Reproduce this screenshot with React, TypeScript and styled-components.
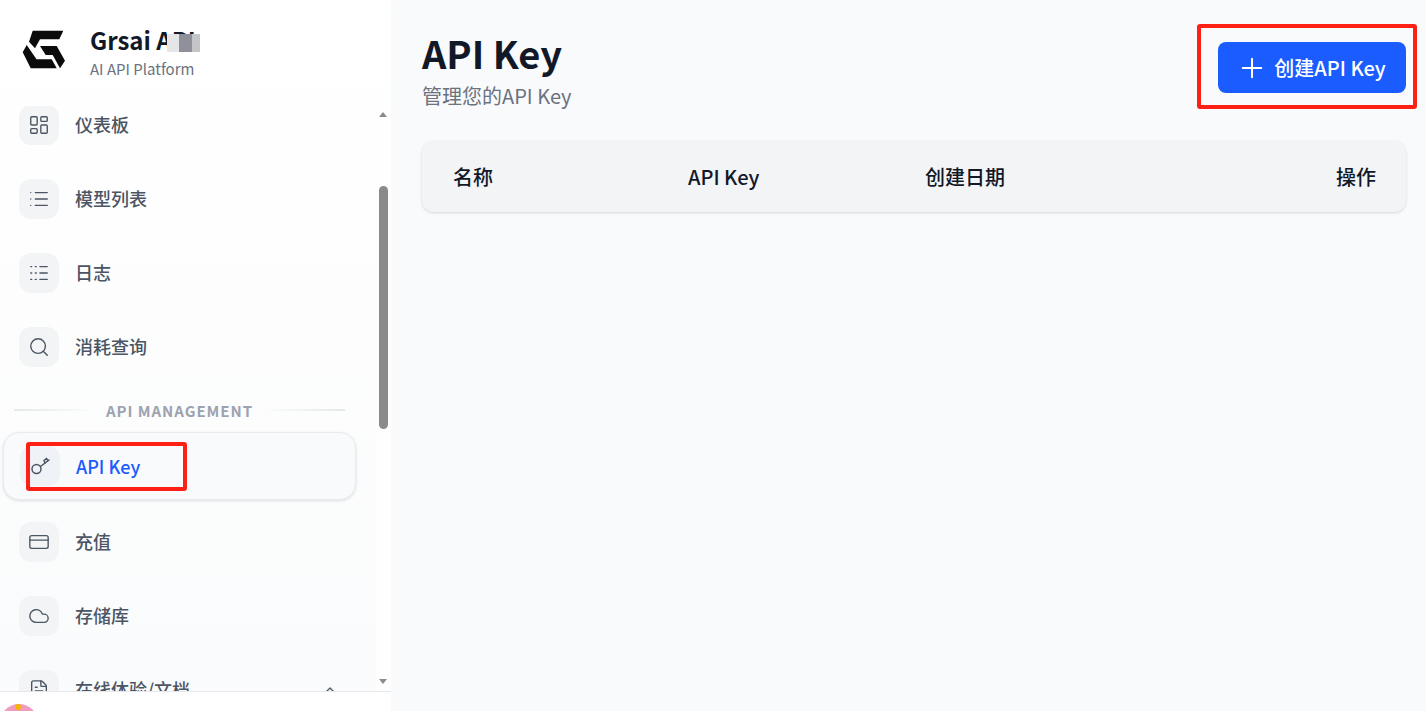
import React from 'react'
import styled, { createGlobalStyle } from 'styled-components'
import { LayoutDashboard, List, Logs, Search, CreditCard, Cloud, FileText, ChevronUp, Plus } from 'lucide-react'

const Global = createGlobalStyle`
  html, body { margin: 0; padding: 0; height: 100%; overflow: hidden; }
  body { font-family: "Noto Sans CJK SC", "Noto Sans", sans-serif; background: #f9fafb; }
`

const Page = styled.div`
  display: flex;
  width: 1426px;
  height: 711px;
  overflow: hidden;
`

const Sidebar = styled.aside`
  width: 391px;
  height: 711px;
  flex: none;
  display: flex;
  flex-direction: column;
  background: linear-gradient(180deg, #ffffff 0%, #fafbfc 100%);
`

const Brand = styled.div`
  height: 106px;
  flex: none;
  display: flex;
  align-items: center;
  padding: 0 0 6px 22px;
  box-sizing: border-box;
`

const BrandText = styled.div`
  margin-left: 24px;
  display: flex;
  flex-direction: column;
  padding-top: 4px;
`

const BrandName = styled.div`
  font-size: 24px;
  font-weight: 700;
  line-height: 32px;
  color: #111827;
  position: relative;
  width: 112px;
  white-space: nowrap;
`

const Blur = styled.span`
  position: absolute;
  left: 77px;
  top: 10px;
  width: 33px;
  height: 18px;
  background: linear-gradient(90deg, #e6e6e9 0 36%, #8f9099 36% 76%, #c4c5c9 76% 100%);
`

const BrandSub = styled.div`
  margin-top: 2px;
  font-size: 15px;
  line-height: 22px;
  color: #6b7280;
`

const NavArea = styled.div`
  flex: 1;
  min-height: 0;
  display: flex;
  overflow: hidden;
`

const NavList = styled.nav`
  width: 376px;
  flex: none;
  overflow: hidden;
  padding: 0 20px 0 3px;
  box-sizing: border-box;
`

const NavItem = styled.div<{ $active?: boolean }>`
  height: 68px;
  display: flex;
  align-items: center;
  padding-left: 16px;
  margin-bottom: ${p => (p.$active ? 8 : 6)}px;
  box-sizing: border-box;
  border-radius: 16px;
  ${p => p.$active && `
    background: #f9fafb;
    border: 1px solid #e9ebef;
    box-shadow: 0 1px 3px rgba(0, 0, 0, 0.12);
  `}
`

const FirstNav = styled(NavItem)`
  margin-top: -15px;
`

const IconBox = styled.span<{ $active?: boolean }>`
  width: 40px;
  height: 40px;
  flex: none;
  display: flex;
  align-items: center;
  justify-content: center;
  border-radius: 12px;
  background: ${p => (p.$active ? '#eff3f8' : '#f3f4f6')};
  color: #4b5563;
`

const NavLabel = styled.span<{ $active?: boolean }>`
  margin-left: 16px;
  padding-bottom: ${p => (p.$active ? 0 : 2)}px;
  font-size: 18px;
  font-weight: 500;
  color: ${p => (p.$active ? '#1a5cff' : '#4b5563')};
  white-space: nowrap;
`

const Chevron = styled.span`
  margin-left: auto;
  margin-right: 18px;
  display: flex;
  color: #4b5563;
`

const SectionRow = styled.div`
  display: flex;
  align-items: center;
  margin: 16px 11px 9px 11px;
  height: 26px;
  gap: 16px;
`

const Line = styled.span<{ $flip?: boolean }>`
  flex: 1;
  height: 2px;
  background: linear-gradient(${p => (p.$flip ? '270deg' : '90deg')}, #e5e7eb, #f9fafb);
`

const SectionLabel = styled.span`
  font-size: 15px;
  font-weight: 700;
  letter-spacing: 0.95px;
  color: #9ca3af;
`

const ScrollTrack = styled.div`
  width: 15px;
  flex: none;
  position: relative;
  background: #fefefe;
`

const Thumb = styled.div`
  position: absolute;
  top: 80px;
  left: 3px;
  width: 9px;
  height: 243px;
  border-radius: 5px;
  background: #8b8b8b;
`

const Arrow = styled.span<{ $down?: boolean }>`
  position: absolute;
  left: 3px;
  ${p => (p.$down ? 'bottom: 7px;' : 'top: 6px;')}
  width: 0;
  height: 0;
  border-left: 4.5px solid transparent;
  border-right: 4.5px solid transparent;
  ${p => (p.$down ? 'border-top: 5px solid #8b8b8b;' : 'border-bottom: 5px solid #8b8b8b;')}
`

const Footer = styled.div`
  height: 20px;
  flex: none;
  border-top: 1px solid #e5e7eb;
  background: #ffffff;
  position: relative;
  overflow: hidden;
  box-sizing: border-box;
`

const Avatar = styled.span`
  position: absolute;
  left: 0;
  top: 12px;
  width: 38px;
  height: 38px;
  border-radius: 50%;
  background: #f29bc1;
`

const AvatarDot = styled.span`
  position: absolute;
  left: 15px;
  top: 0;
  width: 6px;
  height: 6px;
  border-radius: 50%;
  background: #f5b400;
`

const Main = styled.main`
  flex: 1;
  min-width: 0;
  padding: 30px 20px 0 31px;
  box-sizing: border-box;
  background: #f9fafb;
`

const Header = styled.header`
  display: flex;
  justify-content: space-between;
  align-items: flex-start;
`

const Title = styled.h1`
  margin: 0 0 7px;
  font-size: 38px;
  font-weight: 700;
  line-height: 45px;
  color: #111827;
`

const Subtitle = styled.p`
  margin: 0;
  font-size: 20px;
  line-height: 28px;
  color: #6b7280;
`

const CreateWrap = styled.div`
  position: relative;
  margin-top: 12px;
`

const CreateButton = styled.button`
  width: 188px;
  height: 51px;
  padding: 0 2px 0 0;
  border: 0;
  border-radius: 8px;
  background: #1a5cff;
  color: #ffffff;
  font-family: inherit;
  font-size: 20px;
  font-weight: 500;
  display: flex;
  align-items: center;
  justify-content: center;
  gap: 6px;
`

const Mark = styled.span`
  position: absolute;
  border: 4px solid #ff2015;
  border-radius: 3px;
  box-sizing: border-box;
  pointer-events: none;
`

const ButtonMark = styled(Mark)`
  left: -21px;
  top: -18px;
  width: 220px;
  height: 85px;
`

const KeyMark = styled(Mark)`
  left: 23px;
  top: 10px;
  width: 161px;
  height: 49px;
`

const ActiveWrap = styled.div`
  position: relative;
`

const Table = styled.div`
  margin-top: 31px;
  height: 71px;
  display: grid;
  grid-template-columns: 235px 237px 1fr auto;
  align-items: center;
  padding: 0 30px 0 31px;
  border-radius: 12px;
  background: #f3f4f6;
  box-shadow: 0 1px 3px rgba(0, 0, 0, 0.14);
`

const HeadCell = styled.span`
  font-size: 20px;
  font-weight: 500;
  color: #111827;
`

const Logo = () => (
  <svg width="44" height="40" viewBox="0 0 44 40" fill="#0b0b0b">
    <polygon points="10.7,0.7 41.3,0.7 37.3,9.3 18,9.3 13,18.3 7,11.7" />
    <polygon points="4.7,15 0.7,22.3 8.7,38.3 34.7,38.3 29.7,29.3 14.5,29.3" />
    <polygon points="18,16 34.7,16 43,30.7 38,38.3 30.7,25 23.7,25" />
  </svg>
)

const KeyIcon = () => (
  <svg width="22" height="22" viewBox="0 0 22 22" fill="none" stroke="currentColor" strokeWidth="1.5" strokeLinecap="round">
    <circle cx="7.5" cy="14" r="4.5" />
    <path d="M11.5 11.5 20 5" />
    <path d="M16 8 15 5.5 17.5 3.5 19 5.5" />
  </svg>
)

const iconProps = { size: 22, strokeWidth: 1.5 }

const items = [
  { label: '模型列表', icon: <List {...iconProps} /> },
  { label: '日志', icon: <Logs {...iconProps} /> },
  { label: '消耗查询', icon: <Search {...iconProps} /> },
]

const lower = [
  { label: '充值', icon: <CreditCard {...iconProps} /> },
  { label: '存储库', icon: <Cloud {...iconProps} /> },
]

export default function App() {
  return (
    <Page>
      <Global />
      <Sidebar>
        <Brand>
          <Logo />
          <BrandText>
            <BrandName>Grsai API<Blur /></BrandName>
            <BrandSub>AI API Platform</BrandSub>
          </BrandText>
        </Brand>
        <NavArea>
          <NavList>
            <FirstNav>
              <IconBox><LayoutDashboard {...iconProps} /></IconBox>
              <NavLabel>仪表板</NavLabel>
            </FirstNav>
            {items.map(i => (
              <NavItem key={i.label}>
                <IconBox>{i.icon}</IconBox>
                <NavLabel>{i.label}</NavLabel>
              </NavItem>
            ))}
            <SectionRow>
              <Line />
              <SectionLabel>API MANAGEMENT</SectionLabel>
              <Line $flip />
            </SectionRow>
            <ActiveWrap>
              <NavItem $active>
                <IconBox $active><KeyIcon /></IconBox>
                <NavLabel $active>API Key</NavLabel>
              </NavItem>
              <KeyMark />
            </ActiveWrap>
            {lower.map(i => (
              <NavItem key={i.label}>
                <IconBox>{i.icon}</IconBox>
                <NavLabel>{i.label}</NavLabel>
              </NavItem>
            ))}
            <NavItem>
              <IconBox><FileText {...iconProps} /></IconBox>
              <NavLabel>在线体验/文档</NavLabel>
              <Chevron><ChevronUp size={16} /></Chevron>
            </NavItem>
          </NavList>
          <ScrollTrack>
            <Arrow />
            <Thumb />
            <Arrow $down />
          </ScrollTrack>
        </NavArea>
        <Footer>
          <Avatar><AvatarDot /></Avatar>
        </Footer>
      </Sidebar>
      <Main>
        <Header>
          <div>
            <Title>API Key</Title>
            <Subtitle>管理您的API Key</Subtitle>
          </div>
          <CreateWrap>
            <CreateButton><Plus size={32} strokeWidth={1.5} />创建API Key</CreateButton>
            <ButtonMark />
          </CreateWrap>
        </Header>
        <Table>
          <HeadCell>名称</HeadCell>
          <HeadCell>API Key</HeadCell>
          <HeadCell>创建日期</HeadCell>
          <HeadCell>操作</HeadCell>
        </Table>
      </Main>
    </Page>
  )
}
